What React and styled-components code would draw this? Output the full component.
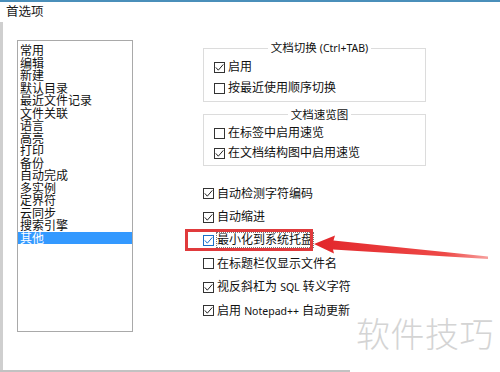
import React from 'react'
import styled, { createGlobalStyle } from 'styled-components'

const GlobalStyle = createGlobalStyle`
    html, body {
        margin: 0;
        padding: 0;
        background: #ffffff;
    }
    body {
        font-family: "Noto Sans", "Noto Sans CJK SC", sans-serif;
        color: #000;
    }
`

const categories = [
    '常用', '编辑', '新建', '默认目录', '最近文件记录', '文件关联', '语言', '高亮',
    '打印', '备份', '自动完成', '多实例', '定界符', '云同步', '搜索引擎', '其他'
]

const switchOptions = [
    { label: '启用', checked: true },
    { label: '按最近使用顺序切换', checked: false },
]

const previewOptions = [
    { label: '在标签中启用速览', checked: false },
    { label: '在文档结构图中启用速览', checked: true },
]

const miscOptions = [
    { label: '自动检测字符编码', checked: true },
    { label: '自动缩进', checked: true },
    { label: '最小化到系统托盘', checked: true, focused: true, marked: true },
    { label: '在标题栏仅显示文件名', checked: false },
    { label: '视反斜杠为 SQL 转义字符', checked: true },
    { label: '启用 Notepad++ 自动更新', checked: true },
]

// latin runs are set a bit smaller than the CJK text, like the Windows UI font
const Mixed = ({ text }) => (
    <>
        {text.split(/([\x21-\x7e]+)/).map((part, i) =>
            /^[\x21-\x7e]+$/.test(part) ? <Latin key={i}>{part}</Latin> : part
        )}
    </>
)

const CheckBox = ({ checked, focused }) => (
    <Box $focused={focused}>
        {checked && (
            <svg width="9" height="9" viewBox="0 0 9 9">
                <polyline
                    points="0.8,4.4 3.3,7.2 8.3,1.4"
                    fill="none"
                    stroke={focused ? '#1a6fc9' : '#222'}
                    strokeWidth="1"
                />
            </svg>
        )}
    </Box>
)

const Option = ({ label, checked, focused, marked, $h }) => (
    <Row $h={$h} $marked={marked}>
        <CheckBox checked={checked} focused={focused} />
        <Label $focused={focused}><Mixed text={label} /></Label>
    </Row>
)


const App = () => {
    return (
        <>
            <GlobalStyle />
            <Window>
                <Title>首选项</Title>
                <Frame>
                    <ListBox>
                        {categories.map((c, i) => (
                            <ListItem key={c} $selected={i === categories.length - 1}>{c}</ListItem>
                        ))}
                    </ListBox>
                    <Options>
                        <Group>
                            <Legend><Mixed text="文档切换 (Ctrl+TAB)" /></Legend>
                            {switchOptions.map(o => <Option key={o.label} {...o} $h={21} />)}
                        </Group>
                        <Group $gap={6}>
                            <Legend>文档速览图</Legend>
                            {previewOptions.map(o => <Option key={o.label} {...o} $h={20} />)}
                        </Group>
                        <Loose>
                            {miscOptions.map(o => <Option key={o.label} {...o} $h={23.4} />)}
                        </Loose>
                    </Options>
                </Frame>
                <BottomRule />

                <Arrow width="500" height="372" viewBox="0 0 500 372">
                    <defs>
                        <linearGradient id="shaft" x1="315" y1="0" x2="490" y2="0" gradientUnits="userSpaceOnUse">
                            <stop offset="0" stopColor="#e2262a" />
                            <stop offset="0.75" stopColor="#ee4a48" />
                            <stop offset="1" stopColor="#f7a5a2" />
                        </linearGradient>
                    </defs>
                    <polygon
                        points="314,244 335,235.5 333.5,240.5 488,256.5 488,259 333,249.5 334,253.5"
                        fill="url(#shaft)"
                    />
                </Arrow>
                <Watermark>软件技巧</Watermark>
            </Window>
        </>
    )
}


const Window = styled.div`
    position: relative;
    width: 500px;
    height: 372px;
    box-sizing: border-box;
    border-top: 2px solid #4a8fba;
    display: flex;
    flex-direction: column;
    overflow: hidden;
    background: #fff;
`

const Title = styled.div`
    height: 20px;
    box-sizing: border-box;
    padding: 3px 0 0 6px;
    font-size: 12.5px;
    line-height: 14px;
    color: #1a1a1a;
`

const Frame = styled.div`
    flex: 1;
    display: flex;
    align-items: flex-start;
    border-left: 3px solid #cfcfcf;
`

const ListBox = styled.div`
    margin: 18px 0 0 14px;
    width: 116px;
    height: 292px;
    box-sizing: border-box;
    border: 1px solid #a9a9a9;
    padding-top: 3px;
    display: flex;
    flex-direction: column;
`

const ListItem = styled.div`
    height: 12.5px;
    padding-left: 2px;
    font-family: "Noto Sans CJK SC", sans-serif;
    font-size: 12px;
    line-height: 12.5px;
    color: ${p => p.$selected ? '#fff' : '#111'};
    background: ${p => p.$selected ? '#3399ff' : 'transparent'};
`

const Options = styled.div`
    margin-left: 70px;
    padding-top: 19px;
    width: 223px;
    display: flex;
    flex-direction: column;
`

const Group = styled.fieldset`
    margin: ${p => p.$gap || 0}px 0 0 0;
    padding: 1.5px 0 2px 10px;
    border: 1px solid #dcdcdc;
    min-inline-size: 0;
`

const Legend = styled.legend`
    margin: 0 auto;
    padding: 0 3px;
    font-size: 11.5px;
    line-height: 14px;
    color: #111;
`

const Latin = styled.span`
    font-family: "Noto Sans", sans-serif;
    font-size: 10.5px;
`

const Loose = styled.div`
    margin-top: 16px;
    display: flex;
    flex-direction: column;
`

const Row = styled.div`
    position: relative;
    height: ${p => p.$h}px;
    display: flex;
    align-items: center;
    gap: 3px;

    &::before {
        content: '';
        display: ${p => p.$marked ? 'block' : 'none'};
        position: absolute;
        left: -18px;
        top: 0px;
        width: 128px;
        height: 22px;
        box-sizing: border-box;
        border: 3px solid #e03a3c;
    }
`

const Box = styled.span`
    width: 11px;
    height: 11px;
    box-sizing: border-box;
    border: 1px solid ${p => p.$focused ? '#1a6fc9' : '#333'};
    background: #fff;
    display: flex;
    align-items: center;
    justify-content: center;
    flex-shrink: 0;
`

const Label = styled.span`
    font-size: 12px;
    line-height: 14px;
    color: #111;
    white-space: nowrap;
    outline: ${p => p.$focused ? '1px dotted #777' : 'none'};
`

const BottomRule = styled.div`
    width: 350px;
    height: 2px;
    background: #c2c2c2;
`

const Arrow = styled.svg`
    position: absolute;
    left: 0;
    top: -2px;
    pointer-events: none;
`

const Watermark = styled.div`
    position: absolute;
    left: 356px;
    top: 311px;
    font-family: "Noto Sans CJK SC", sans-serif;
    font-weight: 300;
    font-size: 34px;
    line-height: 40px;
    color: #d4d4d4;
    letter-spacing: 0.5px;
`

export default App
